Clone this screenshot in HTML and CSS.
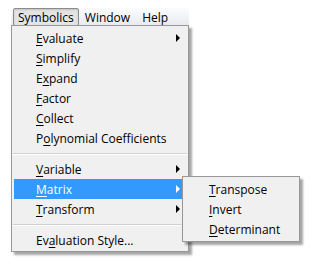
FILE: index.html
```html
<!DOCTYPE html>
<html>
<head>
<meta charset="utf-8">
<link rel="stylesheet" href="styles.css">
</head>
<body>
<div class="menubar">
  <div class="mb-item active">Symbolics</div>
  <div class="mb-item">Window</div>
  <div class="mb-item">Help</div>
</div>
<div class="menu main">
  <div class="row"><span><u>E</u>valuate</span><span class="arrow"></span></div>
  <div class="row"><span><u>S</u>implify</span></div>
  <div class="row"><span>E<u>x</u>pand</span></div>
  <div class="row"><span><u>F</u>actor</span></div>
  <div class="row"><span><u>C</u>ollect</span></div>
  <div class="row"><span>P<u>o</u>lynomial Coefficients</span></div>
  <div class="sep"></div>
  <div class="row"><span><u>V</u>ariable</span><span class="arrow"></span></div>
  <div class="row hl"><span><u>M</u>atrix</span><span class="arrow"></span></div>
  <div class="row"><span><u>T</u>ransform</span><span class="arrow"></span></div>
  <div class="sep"></div>
  <div class="row"><span>Ev<u>a</u>luation Style...</span></div>
</div>
<div class="menu sub">
  <div class="row"><span><u>T</u>ranspose</span></div>
  <div class="row"><span><u>I</u>nvert</span></div>
  <div class="row"><span><u>D</u>eterminant</span></div>
</div>
</body>
</html>
```
FILE: styles.css
```css
html, body {
  margin: 0;
  padding: 0;
  background: #fff;
  font-family: "Open Sans", "Noto Sans", sans-serif;
  font-size: 12px;
  color: #000;
}
u { text-decoration: underline; text-underline-offset: 2px; }
.menubar {
  margin: 8px 0 0 11px;
  width: 178px;
  height: 18px;
  display: flex;
  align-items: stretch;
  background: linear-gradient(#fbfcfe, #e6eaf0);
}
.mb-item {
  padding: 0 5px 0 5px;
  line-height: 17px;
  border: 1px solid transparent;
}
.mb-item.active {
  margin-left: 2px;
  padding: 0 4px;
  background: #e4e4e4;
  border-color: #8b8b8b;
  border-radius: 2px;
  box-shadow: inset 0 1px 2px rgba(0,0,0,0.15);
}
.menu {
  position: absolute;
  background: #f0f0f0;
  border: 1px solid #979797;
  box-shadow: 3px 3px 2px rgba(0,0,0,0.35);
  padding: 2px;
  box-sizing: border-box;
}
.main { left: 11px; top: 25px; width: 178px; height: 227px; }
.sub { left: 182px; top: 176px; width: 118px; height: 66px; padding-top: 2px; }
.row {
  height: 20px;
  display: flex;
  align-items: center;
  justify-content: space-between;
  padding: 0 6px 0 22px;
}
.sub .row { padding-left: 24px; }
.row.hl { background: #3399ff; color: #fff; }
.arrow {
  width: 0; height: 0;
  border-top: 4px solid transparent;
  border-bottom: 4px solid transparent;
  border-left: 4px solid #000;
}
.hl .arrow { border-left-color: #fff; }
.sep {
  height: 11px;
  display: flex;
  align-items: center;
  margin: 0 -1px;
}
.sep::before {
  content: "";
  flex: 1;
  height: 1px;
  background: #d0d0d0;
  border-bottom: 1px solid #fff;
}
```
